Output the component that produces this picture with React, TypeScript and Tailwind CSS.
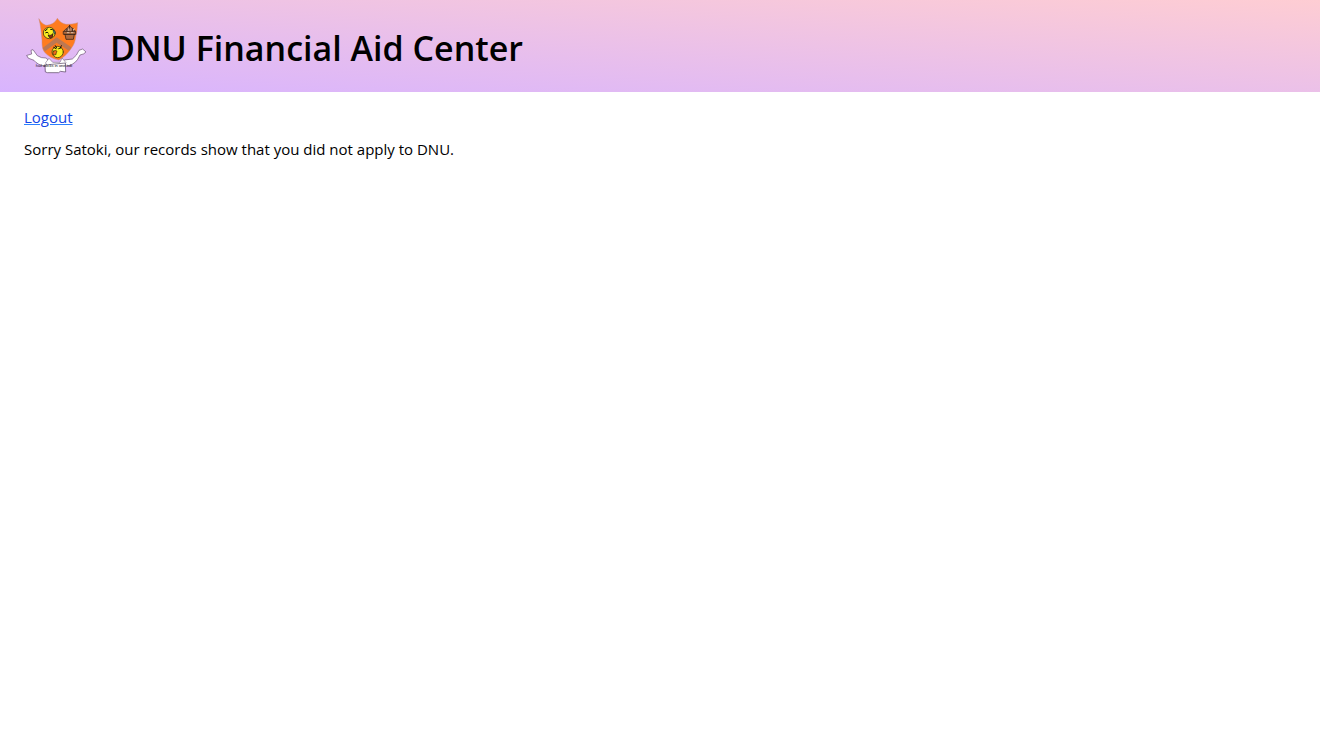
function Crest() {
  return (
    <svg
      role="img"
      aria-label="DNU crest"
      viewBox="12 18 192 180"
      className="h-15 w-16 shrink-0"
      fill="none"
      strokeLinecap="round"
      strokeLinejoin="round"
    >
      <path
        d="M57 27C62 36 69 43 78 46C93 45 105 39 112 25C118 35 127 41 138 43C150 43 163 42 173 38C171 54 172 63 168 75C166 92 163 103 155 113C146 127 132 142 116 150C99 147 85 139 74 127C66 117 66 103 66 90C64 67 62 47 57 27Z"
        fill="#ff7c1f"
        stroke="#c98a80"
        strokeWidth="1.5"
      />
      <path d="M68 114L110 82L154 112L147 122L110 98L75 124Z" fill="#bd7852" />

      <ellipse cx="88" cy="69" rx="18" ry="17" fill="#fbee22" stroke="#4a3c10" strokeWidth="2.5" />
      <path d="M76 62l6-5M92 58q6-2 9 4M77 68q5-4 8 1" stroke="#141008" strokeWidth="3" />
      <path d="M85 76q9 2 14-5q1 12-8 13q-5-1-6-8Z" fill="#8f2b18" stroke="#141008" strokeWidth="2" />
      <path d="M100 60q8 5 4 13q-6-5-4-13Z" fill="#4d9a9c" stroke="#26332c" strokeWidth="2" />

      <path d="M132 64q4-8 10-9q3-6 7-8q3 6 9 8q5 3 8 9Z" fill="#c08a68" stroke="#3d281e" strokeWidth="2.5" />
      <path d="M131 64h36v9h-4l-3 15h-22l-3-15h-4Z" fill="#b06a3e" stroke="#3d281e" strokeWidth="2.5" />
      <path d="M149 46v12M141 57v6M157 56v7M134 73h30" stroke="#33211a" strokeWidth="3" />
      <path d="M145 61l3-4M160 59l4-2M142 68h5M154 68h5" stroke="#e3d0bd" strokeWidth="2.5" />

      <circle cx="113" cy="126" r="17" fill="#fbee22" stroke="#4a3c10" strokeWidth="2.5" />
      <path d="M101 112l7 4M106 107l4 7M116 116l7-3M124 107l-3 7" stroke="#141008" strokeWidth="3" />
      <path d="M101 123q8-4 10 1q-1 4-3 5q3 5-4 6q-8-1-5-6q-2-3 2-6Z" fill="#f06b16" stroke="#30280c" strokeWidth="2" />

      <path
        d="M21 136L35 132L33 121L39 119L52 137Q63 145 79 144L88 156Q79 159 77 169Q52 165 42 151L26 145Z"
        fill="#fff"
        stroke="#69536f"
        strokeWidth="2"
      />
      <path
        d="M197 125L188 117L177 121Q171 137 157 147L133 150L126 157Q139 158 137 169Q162 165 173 148L180 135L190 132Z"
        fill="#fff"
        stroke="#69536f"
        strokeWidth="2"
      />
      <path d="M77 158L87 145L98 157L120 157L126 144L138 158L126 170L86 170Z" fill="#fff" stroke="#69536f" strokeWidth="1.5" />
      <path d="M76 165L136 159L137 186L121 184L116 188L82 188L77 186Z" fill="#fff" stroke="#51405a" strokeWidth="2" />
      <text
        x="102"
        y="170"
        textAnchor="middle"
        fill="#17131a"
        fontSize="12"
        fontFamily="Liberation Sans, sans-serif"
      >
        hail ducks in one tub
      </text>
    </svg>
  );
}

export default function App() {
  return (
    <div className="min-h-screen bg-white font-['Open_Sans','Noto_Sans',sans-serif] text-black">
      <header className="flex items-center gap-[22px] bg-[linear-gradient(to_top_right,#d8b4fe,#fecdd3)] px-6 py-4">
        <Crest />
        <h1 className="pt-1 text-[34px] leading-10 font-semibold">DNU Financial Aid Center</h1>
      </header>
      <main className="flex flex-col items-start gap-2 px-6 py-[13px] text-[15px] leading-6">
        <a href="#logout" className="text-blue-700 underline decoration-blue-500">
          Logout
        </a>
        <p>Sorry Satoki, our records show that you did not apply to DNU.</p>
      </main>
    </div>
  );
}
